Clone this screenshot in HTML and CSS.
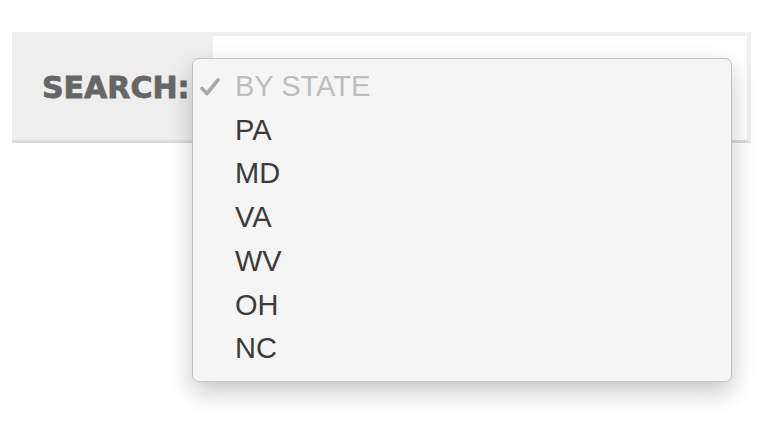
FILE: index.html
```html
<!DOCTYPE html>
<html>
<head>
<meta charset="utf-8">
<link rel="stylesheet" href="styles.css">
</head>
<body>
<div class="search">
  <div class="label">SEARCH:</div>
  <div class="input"></div>
</div>
<div class="menu">
  <div class="item header">
    <svg class="check" width="20" height="18" viewBox="0 0 20 18"><path d="M2 10.5 L7 15.5 L18 2" fill="none" stroke="#a9a9a9" stroke-width="3.6" stroke-linecap="round" stroke-linejoin="round"/></svg>
    BY STATE
  </div>
  <div class="item">PA</div>
  <div class="item">MD</div>
  <div class="item">VA</div>
  <div class="item">WV</div>
  <div class="item">OH</div>
  <div class="item">NC</div>
</div>
</body>
</html>
```
FILE: styles.css
```css
html, body {
  margin: 0;
  background: #fff;
}
body {
  padding: 32px 0 0 12px;
  font-family: "Liberation Sans", Arial, sans-serif;
}
.search {
  display: flex;
  height: 111px;
}
.label {
  width: 199px;
  box-sizing: border-box;
  background: #eeeeee;
  border-bottom: 3px solid #dcdcdc;
  display: flex;
  align-items: center;
  padding-left: 30px;
  padding-top: 3px;
  font-family: "DejaVu Sans", sans-serif;
  font-weight: 700;
  font-size: 30px;
  -webkit-text-stroke: 0.8px #666666;
  color: #666666;
  white-space: nowrap;
}
.input {
  width: 540px;
  box-sizing: border-box;
  background: #fff;
  border: 4px solid #efefef;
  border-left-width: 2px;
  border-bottom: 3px solid #dcdcdc;
}
.menu {
  position: absolute;
  left: 192px;
  top: 58px;
  width: 540px;
  height: 324px;
  box-sizing: border-box;
  background: #f5f5f5;
  border: 1px solid #c2c2c2;
  border-radius: 7px;
  box-shadow: 0 10px 24px rgba(0, 0, 0, 0.22);
  padding: 6px 0 0 42px;
}
.item {
  position: relative;
  font-size: 29px;
  line-height: 43.7px;
  color: #3b3b3b;
}
.header {
  color: #bdbdbd;
}
.check {
  position: absolute;
  left: -35px;
  top: 13px;
}
```
